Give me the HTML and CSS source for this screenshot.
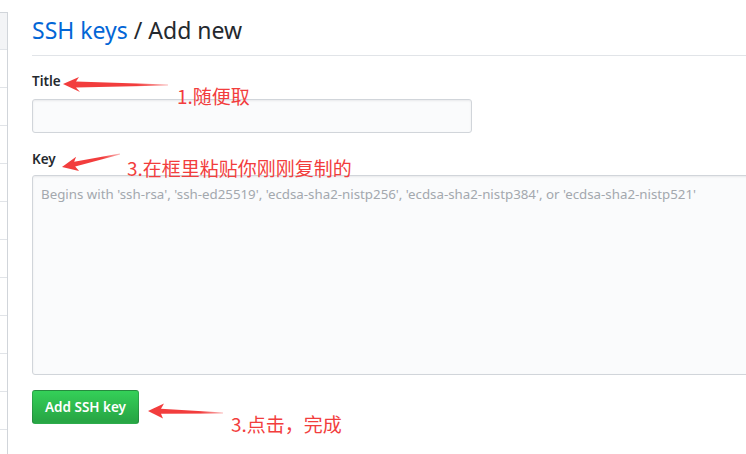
FILE: index.html
```html
<!DOCTYPE html>
<html lang="zh">
<head>
<meta charset="utf-8">
<title>SSH keys / Add new</title>
<link rel="stylesheet" href="styles.css">
</head>
<body>
<div class="page">
  <nav class="sidebar">
    <div class="side-head"></div>
    <div class="side-item"></div>
    <div class="side-item"></div>
    <div class="side-item"></div>
    <div class="side-item"></div>
    <div class="side-item"></div>
    <div class="side-item"></div>
    <div class="side-item"></div>
    <div class="side-item"></div>
    <div class="side-item"></div>
    <div class="side-item"></div>
    <div class="side-item"></div>
  </nav>
  <main class="main">
    <h2 class="subhead"><a class="crumb" href="#">SSH keys</a> / Add new</h2>
    <form class="form">
      <div class="group group-title">
        <label class="label" for="title">Title</label>
        <input class="input" id="title" type="text">
      </div>
      <div class="group group-key">
        <label class="label" for="key">Key</label>
        <textarea class="textarea" id="key" placeholder="Begins with 'ssh-rsa', 'ssh-ed25519', 'ecdsa-sha2-nistp256', 'ecdsa-sha2-nistp384', or 'ecdsa-sha2-nistp521'"></textarea>
      </div>
      <button class="btn" type="button">Add SSH key</button>
    </form>
  </main>

  <svg class="arrows" width="746" height="454" viewBox="0 0 746 454">
    <defs>
      <linearGradient id="fade1" x1="0" x2="1" y1="0" y2="0">
        <stop offset="0.7" stop-color="#f23d3d"/>
        <stop offset="1" stop-color="#f23d3d" stop-opacity="0.35"/>
      </linearGradient>
    </defs>
    <polygon fill="url(#fade1)" points="63,84 79,77 76,81.5 168,84.4 168,85.6 76,87.5 80,92"/>
    <polygon fill="url(#fade1)" points="62,167 76.1,156.7 74.2,161.8 119.9,153.4 120.1,154.6 75.2,166.6 79.1,171"/>
    <polygon fill="url(#fade1)" points="148,411 164,403.5 161,408.7 223,412.4 223,413.6 161,413.8 163,418.5"/>
  </svg>
  <span class="note note-1">1.随便取</span>
  <span class="note note-2">3.在框里粘贴你刚刚复制的</span>
  <span class="note note-3">3.点击，完成</span>
</div>
</body>
</html>
```

FILE: styles.css
```css
html, body {
  margin: 0;
  padding: 0;
  overflow: hidden;
  background: #fff;
}

body {
  font-family: "Noto Sans", "Open Sans", sans-serif;
  font-size: 14px;
  color: #24292e;
  width: 746px;
  height: 454px;
}

.page {
  position: relative;
  display: flex;
  align-items: flex-start;
  width: 746px;
  height: 454px;
  overflow: hidden;
}

.sidebar {
  flex: none;
  width: 7px;
  margin-top: 12px;
  border: 1px solid #d1d5da;
  border-left: none;
  border-bottom: none;
  height: 460px;
}

.side-head {
  height: 36px;
  background: #f3f4f6;
}

.side-item {
  height: 37px;
  border-top: 1px solid #e1e4e8;
}

.main {
  flex: none;
  width: 760px;
  margin-left: 24px;
  padding-top: 12px;
}

.subhead {
  margin: 0 0 15px;
  padding: 0 0 7px;
  font-size: 23px;
  font-weight: 400;
  line-height: 36px;
  color: #24292e;
  border-bottom: 1px solid #e1e4e8;
}

.crumb {
  color: #0366d6;
  text-decoration: none;
}

.form {
  margin: 0;
}

.group {
  display: flex;
  flex-direction: column;
  align-items: flex-start;
}

.label {
  font-weight: 600;
  font-size: 13.5px;
  line-height: 21px;
  margin-bottom: 7px;
}

.group-key {
  margin-top: 16px;
}

.group-key .label {
  margin-bottom: 5px;
}

.input,
.textarea {
  box-sizing: border-box;
  margin: 0;
  background: #fafbfc;
  border: 1px solid #d1d5da;
  border-radius: 3px;
  box-shadow: inset 0 1px 2px rgba(27, 31, 35, 0.075);
  font-family: inherit;
  font-size: 14px;
  color: #24292e;
  outline: none;
}

.input {
  width: 440px;
  height: 34px;
  padding: 6px 8px;
}

.textarea {
  width: 740px;
  height: 200px;
  padding: 8px;
  resize: none;
  font-size: 13.3px;
  line-height: 20px;
}

.textarea::placeholder {
  color: #a3a8ae;
}

.btn {
  display: block;
  margin-top: 15px;
  box-sizing: border-box;
  height: 34px;
  width: 107px;
  padding: 0;
  white-space: nowrap;
  font-family: inherit;
  font-size: 13.5px;
  font-weight: 600;
  color: #fff;
  background-image: linear-gradient(-180deg, #34d058 0%, #28a745 90%);
  border: 1px solid rgba(27, 31, 35, 0.2);
  border-radius: 3px;
}

.arrows {
  position: absolute;
  left: 0;
  top: 0;
  pointer-events: none;
}

.note {
  position: absolute;
  font-family: "Noto Sans CJK SC", "Noto Sans", sans-serif;
  font-size: 19px;
  line-height: 20px;
  color: #f23d3d;
  white-space: nowrap;
}

.note-1 {
  left: 177px;
  top: 86px;
}

.note-2 {
  left: 127px;
  top: 158px;
}

.note-3 {
  left: 231px;
  top: 414px;
}
```
